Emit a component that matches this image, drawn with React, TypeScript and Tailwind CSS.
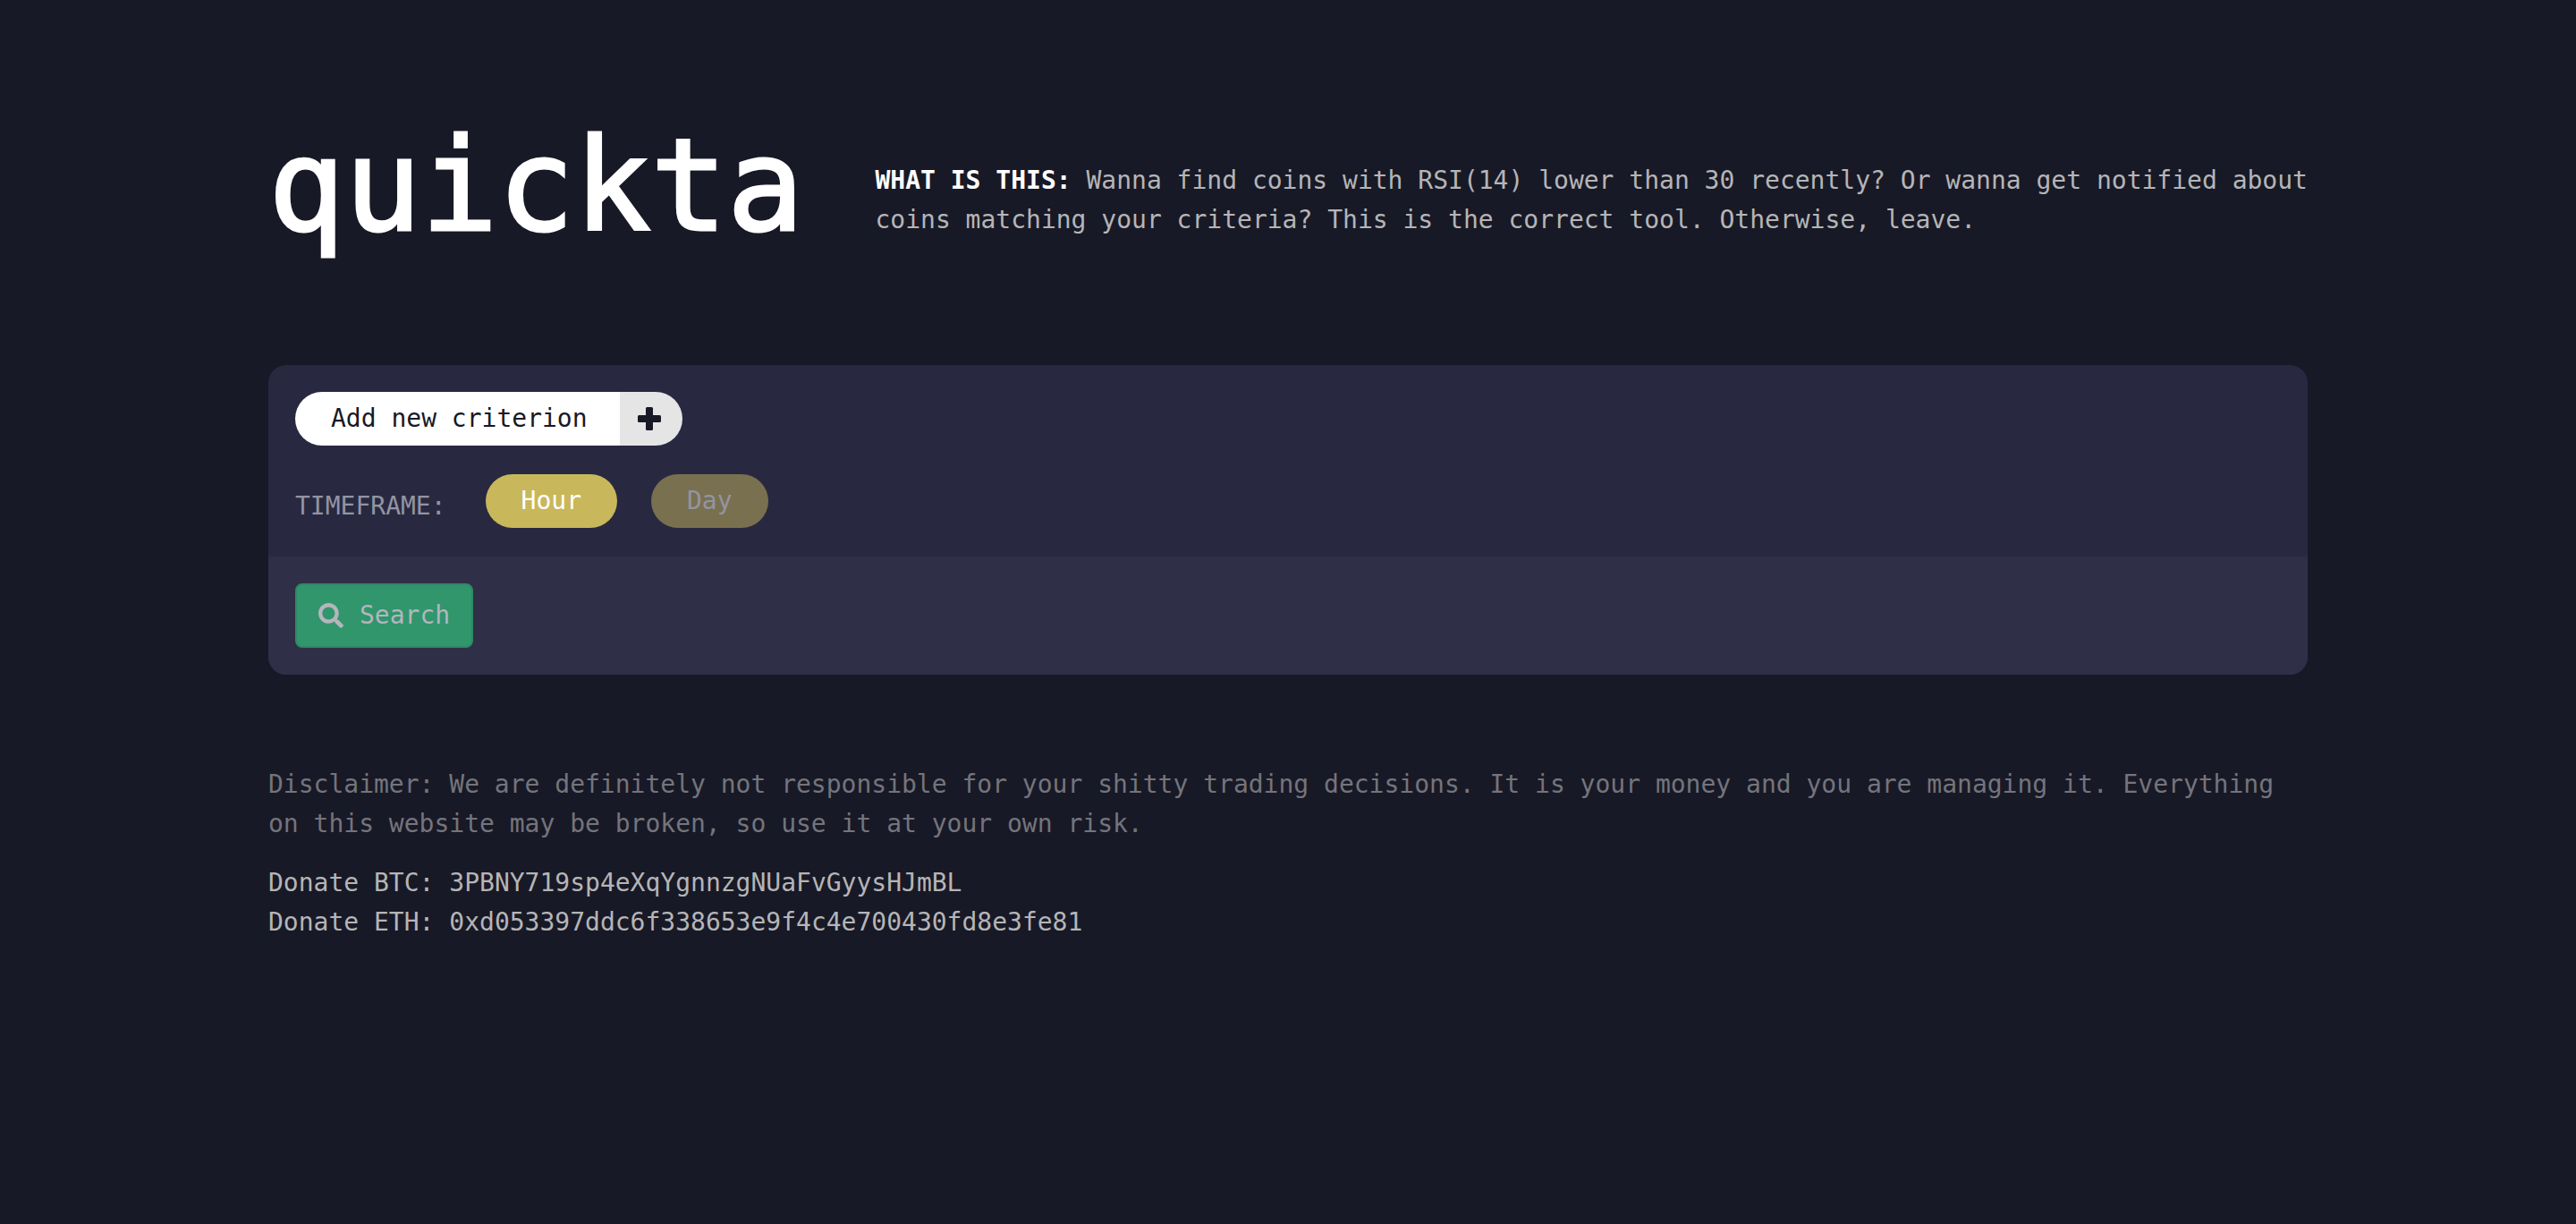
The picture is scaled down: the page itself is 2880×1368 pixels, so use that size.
import { useState } from "react";
import { FaSearch } from "react-icons/fa";

const timeframes = ["Hour", "Day"];

const donations = [
  { coin: "BTC", address: "3PBNY719sp4eXqYgnnzgNUaFvGyysHJmBL" },
  { coin: "ETH", address: "0xd053397ddc6f338653e9f4c4e700430fd8e3fe81" },
];

function PlusIcon() {
  return (
    <svg viewBox="0 0 26 26" className="size-[26px]" fill="currentColor" aria-hidden="true">
      <rect x="9" y="0" width="8" height="26" rx="1.5" />
      <rect x="0" y="9" width="26" height="8" rx="1.5" />
    </svg>
  );
}

function Header() {
  return (
    <header className="flex items-start gap-20">
      <h1 className="shrink-0 text-[142px] leading-[132px] text-white [-webkit-text-stroke:3px_white]">
        quickta
      </h1>
      <p className="min-w-0 flex-1 pt-[38px] text-[#b5b5b7]">
        <strong className="font-bold text-white">WHAT IS THIS:</strong> Wanna find coins with
        RSI(14) lower than 30 recently? Or wanna get notified about coins matching your criteria?
        This is the correct tool. Otherwise, leave.
      </p>
    </header>
  );
}

function SearchCard() {
  const [timeframe, setTimeframe] = useState("Hour");
  return (
    <section className="overflow-hidden rounded-[20px] bg-[#282940]">
      <div className="flex flex-col items-start gap-8 px-[30px] pt-[30px] pb-8">
        <button type="button" className="flex h-[60px] overflow-hidden rounded-full text-[#181926]">
          <span className="flex h-full items-center bg-white pr-9 pl-10">Add new criterion</span>
          <span className="flex h-full w-[70px] items-center justify-center bg-[#e5e5e5] pr-1">
            <PlusIcon />
          </span>
        </button>
        <div className="flex items-center">
          <span id="timeframe" className="mr-11 pt-3 text-[#9394a2]">
            TIMEFRAME:
          </span>
          <div role="group" aria-labelledby="timeframe" className="flex gap-[38px]">
            {timeframes.map((name) => (
              <button
                key={name}
                type="button"
                aria-pressed={timeframe === name}
                onClick={() => setTimeframe(name)}
                className={
                  timeframe === name
                    ? "h-[60px] rounded-full bg-[#c9b75b] px-10 text-white"
                    : "h-[60px] rounded-full bg-[#79704f] px-10 text-[#9394a2]"
                }
              >
                {name}
              </button>
            ))}
          </div>
        </div>
      </div>
      <div className="bg-[#2f3047] p-[30px]">
        <button
          type="button"
          className="flex h-[72px] items-center gap-[18px] rounded-lg border-2 border-[#2e8a64] bg-[#31966c] px-6 text-[#b5b5be]"
        >
          <FaSearch size={28} aria-hidden="true" />
          Search
        </button>
      </div>
    </section>
  );
}

function Footer() {
  return (
    <footer className="flex flex-col gap-[22px]">
      <p className="text-[#74747c]">
        Disclaimer: We are definitely not responsible for your shitty trading decisions. It is your
        money and you are managing it. Everything on this website may be broken, so use it at your
        own risk.
      </p>
      <div className="text-[#b5b5b7]">
        {donations.map(({ coin, address }) => (
          <p key={coin}>
            Donate {coin}: {address}
          </p>
        ))}
      </div>
    </footer>
  );
}

export default function App() {
  return (
    <div className="min-h-screen bg-[#181926] font-['DejaVu_Sans_Mono',monospace] text-[28px] leading-[44px]">
      <main className="mx-auto flex max-w-[2280px] flex-col pt-[142px] pb-20">
        <Header />
        <div className="mt-[134px] mb-[101px]">
          <SearchCard />
        </div>
        <Footer />
      </main>
    </div>
  );
}
